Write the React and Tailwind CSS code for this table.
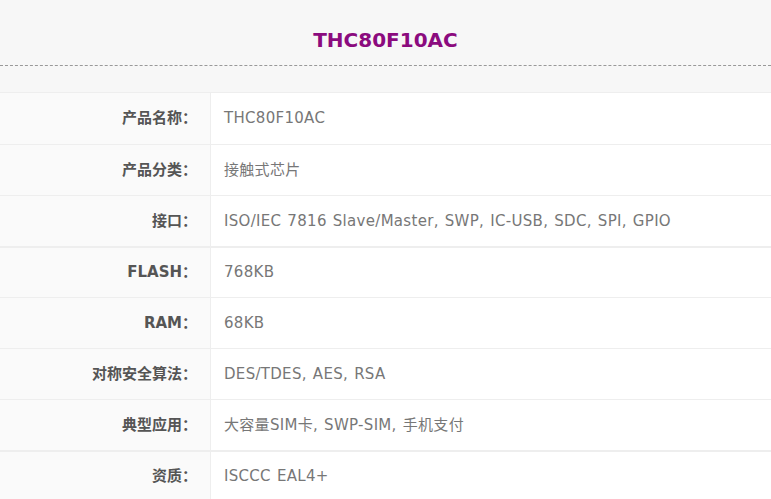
import React from 'react';

const rows = [
  { label: '产品名称：', value: 'THC80F10AC' },
  { label: '产品分类：', value: '接触式芯片' },
  { label: '接口：', value: 'ISO/IEC 7816 Slave/Master, SWP, IC-USB, SDC, SPI, GPIO' },
  { label: 'FLASH：', value: '768KB', thick: true },
  { label: 'RAM：', value: '68KB' },
  { label: '对称安全算法：', value: 'DES/TDES, AES, RSA' },
  { label: '典型应用：', value: '大容量SIM卡, SWP-SIM, 手机支付' },
  { label: '资质：', value: 'ISCCC EAL4+', thick: true },
];

const App = () => {
  return (
    <div
      className="w-[771px] h-[499px] overflow-hidden bg-[#f7f7f7]"
      style={{ fontFamily: '"DejaVu Sans", Verdana, "Noto Sans CJK SC", sans-serif' }}
    >
      <div className="h-[66px] flex items-center justify-center border-b border-dashed border-[#999]">
        <h1 className="text-[20px] font-bold text-[#8b0b7e] pt-[14px]">THC80F10AC</h1>
      </div>
      <div className="h-[26px]" />
      <div className="border-t border-[#eee]">
        {rows.map((r, i) => (
          <div
            key={i}
            className={`flex h-[51px] ${i === 0 ? '' : r.thick ? 'border-t-2 border-[#eee]' : 'border-t border-[#eee]'}`}
          >
            <div className="w-[211px] shrink-0 bg-[#fafafa] border-r border-[#eee] flex items-center justify-end pr-[13px] text-[15px] font-bold text-[#555]">
              {r.label}
            </div>
            <div className="flex-1 bg-white flex items-center pl-[13px] text-[15px] tracking-[0.3px] [word-spacing:1px] text-[#777]">
              {r.value}
            </div>
          </div>
        ))}
      </div>
    </div>
  );
};

export default App;
